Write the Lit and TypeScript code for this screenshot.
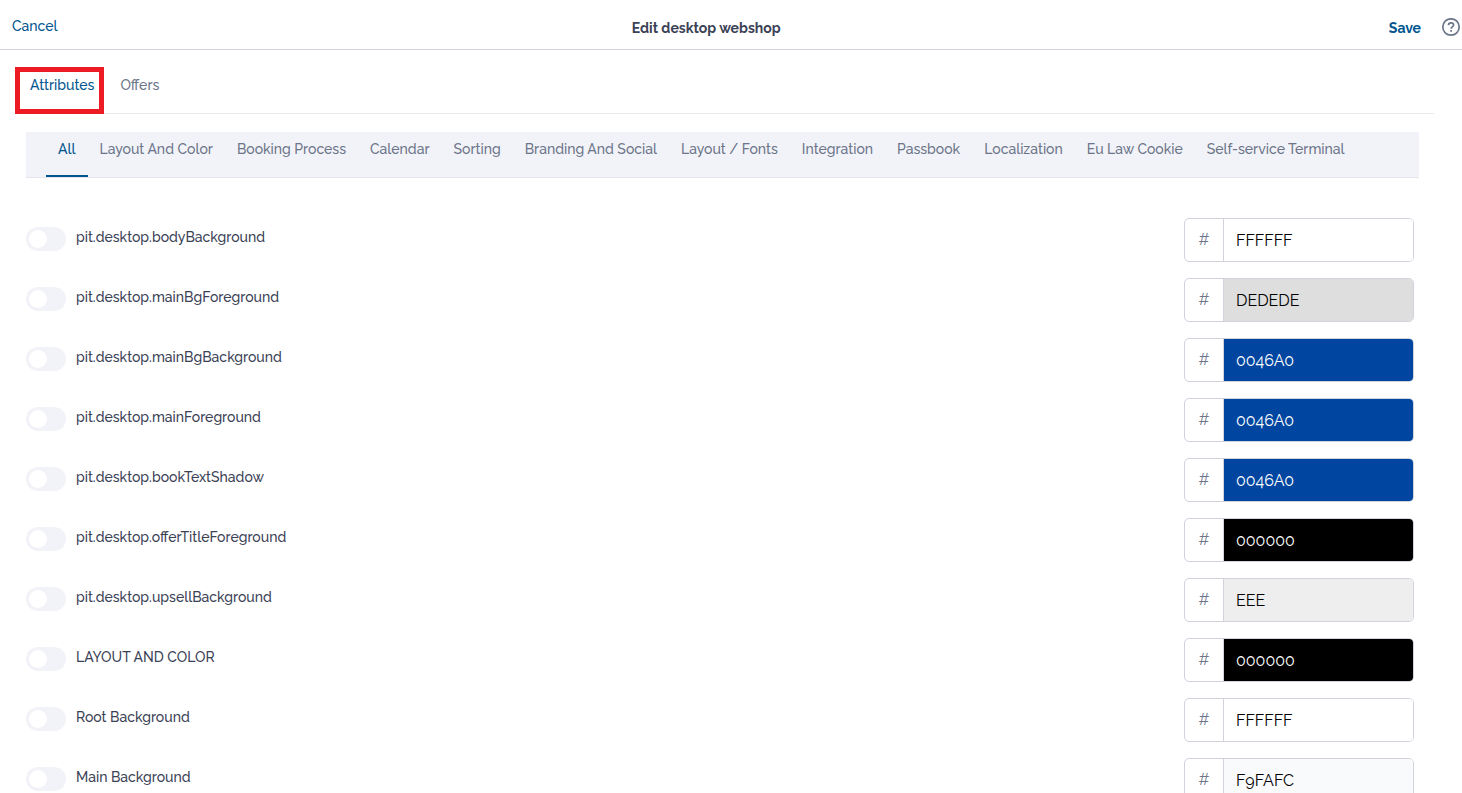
import { LitElement, html, css } from 'lit';
import { customElement, property, state } from 'lit/decorators.js';
import { classMap } from 'lit/directives/class-map.js';
import { styleMap } from 'lit/directives/style-map.js';

interface Attribute {
  name: string;
  value: string;
  dark?: boolean;
}

const CATEGORIES = [
  'All',
  'Layout And Color',
  'Booking Process',
  'Calendar',
  'Sorting',
  'Branding And Social',
  'Layout / Fonts',
  'Integration',
  'Passbook',
  'Localization',
  'Eu Law Cookie',
  'Self-service Terminal',
];

const ATTRIBUTES: Attribute[] = [
  { name: 'pit.desktop.bodyBackground', value: 'FFFFFF' },
  { name: 'pit.desktop.mainBgForeground', value: 'DEDEDE' },
  { name: 'pit.desktop.mainBgBackground', value: '0046A0', dark: true },
  { name: 'pit.desktop.mainForeground', value: '0046A0', dark: true },
  { name: 'pit.desktop.bookTextShadow', value: '0046A0', dark: true },
  { name: 'pit.desktop.offerTitleForeground', value: '000000', dark: true },
  { name: 'pit.desktop.upsellBackground', value: 'EEE' },
  { name: 'LAYOUT AND COLOR', value: '000000', dark: true },
  { name: 'Root Background', value: 'FFFFFF' },
  { name: 'Main Background', value: 'F9FAFC' },
];

@customElement('attribute-row')
export class AttributeRow extends LitElement {
  @property({ attribute: false })
  attr!: Attribute;

  render() {
    const { name, value, dark = false } = this.attr;

    return html`
      <div class="row">
        <label class="toggle">
          <input class="switch" type="checkbox" />
          <span class="name">${name}</span>
        </label>
        <label class="color">
          <span class="hash">#</span>
          <input
            class=${classMap({ value: true, dark })}
            style=${styleMap({ backgroundColor: `#${value}` })}
            type="text"
            aria-label=${name}
            .value=${value}
          />
        </label>
      </div>
    `;
  }

  static styles = css`
    :host {
      display: block;
    }
    .row {
      display: flex;
      align-items: center;
      justify-content: space-between;
    }
    .toggle {
      display: flex;
      align-items: center;
      gap: 10px;
      padding-bottom: 2px;
      color: #3b4256;
    }
    .name {
      padding-bottom: 4px;
    }
    .switch {
      appearance: none;
      display: flex;
      align-items: center;
      box-sizing: border-box;
      width: 40px;
      height: 24px;
      margin: 0;
      padding: 0 3px;
      border-radius: 12px;
      background: #f2f3f8;
      cursor: pointer;
    }
    .switch::before {
      content: '';
      width: 18px;
      height: 18px;
      border-radius: 50%;
      background: #fff;
    }
    .switch:checked {
      justify-content: flex-end;
      background: #00558f;
    }
    .color {
      display: flex;
      box-sizing: border-box;
      width: 230px;
      height: 44px;
      border: 1px solid #d1d4de;
      border-radius: 5px;
      overflow: hidden;
    }
    .hash {
      box-sizing: border-box;
      width: 39px;
      border-right: 1px solid #d1d4de;
      color: #6c7589;
      font-size: 16px;
      font-weight: 400;
      line-height: 42px;
      text-align: center;
    }
    .value {
      flex: 1;
      min-width: 0;
      padding: 0 12px;
      border: 0;
      outline: 0;
      color: #000;
      font-family: inherit;
      font-size: 16px;
    }
    .dark {
      color: #fff;
    }
  `;
}

@customElement('app-root')
export class AppRoot extends LitElement {
  @state()
  private tab = 'Attributes';

  @state()
  private category = 'All';

  render() {
    return html`
      <header class="header">
        <button class="cancel">Cancel</button>
        <h1 class="title">Edit desktop webshop</h1>
        <div class="actions">
          <button class="save">Save</button>
          <button class="help" aria-label="Help">
            <svg width="20" height="20" viewBox="0 0 20 20" fill="none" stroke="currentColor">
              <circle cx="10" cy="9" r="8.2" stroke-width="1.7" />
              <path d="M7.4 7.2C7.5 5.7 8.5 4.9 10 4.9s2.6.8 2.6 2.2c0 1.7-2.5 1.8-2.5 3.6" stroke-width="1.7" />
              <path d="M10.1 12v1.8" stroke-width="1.8" />
            </svg>
          </button>
        </div>
      </header>
      <nav class="tabs">
        ${['Attributes', 'Offers'].map(
          (name) => html`
            <button
              class=${classMap({ tab: true, active: name === this.tab, marked: name === 'Attributes' })}
              @click=${() => (this.tab = name)}
            >${name}</button>
          `
        )}
      </nav>
      <main class="content">
        <nav class="categories">
          ${CATEGORIES.map(
            (name) => html`
              <button
                class=${classMap({ category: true, active: name === this.category })}
                @click=${() => (this.category = name)}
              >${name}</button>
            `
          )}
        </nav>
        <div class="list">
          ${ATTRIBUTES.map((attr) => html`<attribute-row .attr=${attr}></attribute-row>`)}
        </div>
      </main>
    `;
  }

  static styles = css`
    :host {
      display: block;
      height: 100vh;
      overflow: hidden;
      background: #fff;
      color: #3b4256;
      font-family: Raleway, Lato, sans-serif;
      font-size: 14px;
      font-weight: 500;
      line-height: 20px;
    }
    button {
      margin: 0;
      padding: 0;
      border: 0;
      background: none;
      color: #6c7589;
      font: inherit;
      white-space: nowrap;
      cursor: pointer;
    }
    .header {
      display: flex;
      align-items: center;
      box-sizing: border-box;
      height: 50px;
      padding: 6px 0 0 12px;
      border-bottom: 1px solid #d1d4de;
    }
    .cancel {
      padding-bottom: 4px;
      color: #00558f;
    }
    .title {
      flex: 1;
      margin: 0;
      font-size: 14px;
      font-weight: 700;
      text-align: center;
    }
    .actions {
      display: flex;
      align-items: center;
      gap: 20px;
      padding: 0 1px 0 34px;
    }
    .save {
      color: #00558f;
      font-weight: 700;
    }
    .help {
      display: flex;
    }
    .tabs {
      display: flex;
      gap: 2px;
      margin: 17px 28px 0 18px;
      border-bottom: 1px solid #e9eaee;
    }
    .tab {
      position: relative;
      padding: 8px 12px 18px;
    }
    .active {
      color: #00558f;
    }
    .marked::after {
      content: '';
      position: absolute;
      inset: 0 2px -1px -3px;
      border: 5px solid #ed1c24;
    }
    .content {
      padding: 18px 43px 0 26px;
    }
    .categories {
      display: flex;
      padding: 0 20px;
      border-bottom: 1px solid #e4e6ee;
      background: #f2f3f8;
    }
    .category {
      padding: 7px 12px 16px;
      border-bottom: 2px solid transparent;
    }
    .category.active {
      border-bottom-color: #00558f;
    }
    .list {
      display: flex;
      flex-direction: column;
      gap: 16px;
      padding: 40px 5px 0 0;
    }
  `;
}
